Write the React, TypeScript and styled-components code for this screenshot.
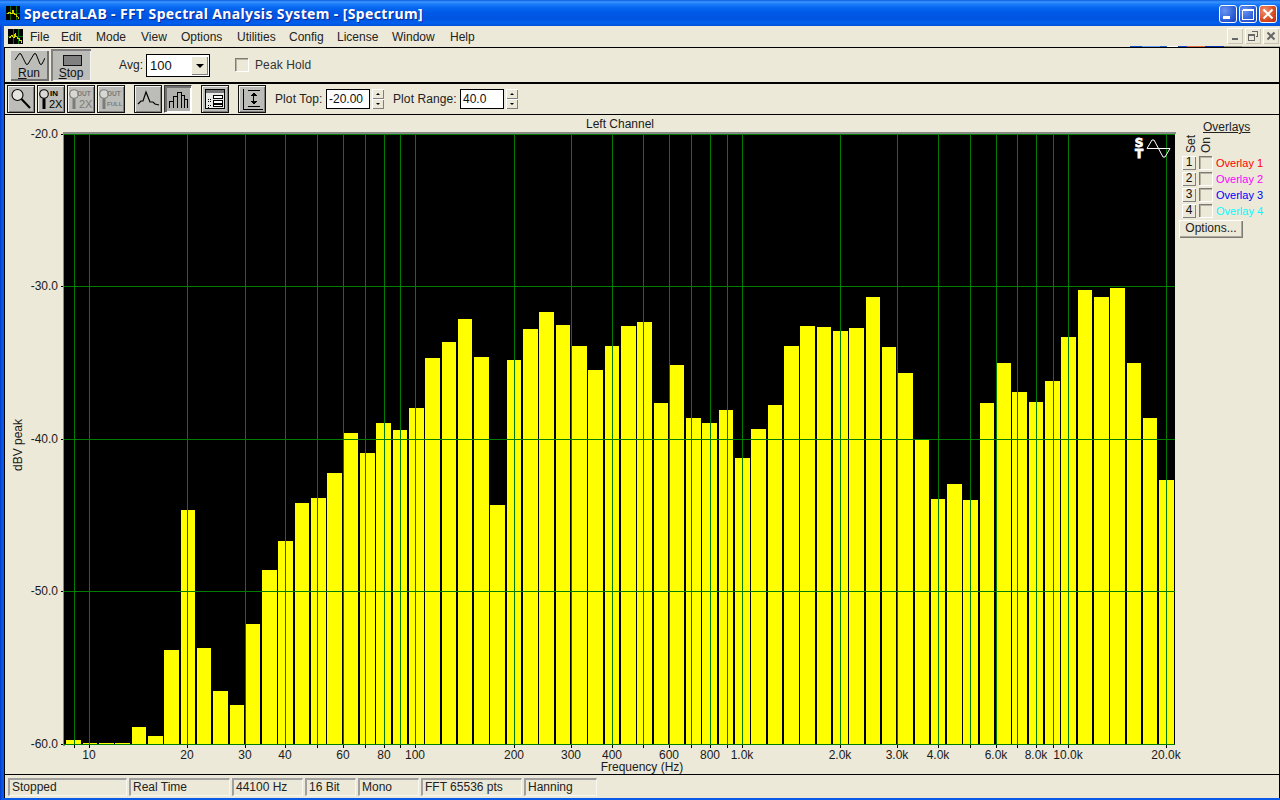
import React from "react";
import styled, { createGlobalStyle, css } from "styled-components";

const Global = createGlobalStyle`
  html, body { margin: 0; padding: 0; width: 1280px; height: 800px; overflow: hidden; background: #ece9d8; }
  * { box-sizing: border-box; }
`;

const UI = `"Liberation Sans", Arial, sans-serif`;

const Window = styled.div`
  width: 1280px; height: 800px; display: flex; flex-direction: column;
  font-family: ${UI}; font-size: 12px; color: #1a1a1a;
  background: linear-gradient(90deg, #0038c8 0, #0a58e6 2px, #0a5ae8 4px);
`;
const TitleBar = styled.div`
  height: 26px; flex: none; display: flex; align-items: center; padding: 0 3px 0 6px;
  background: linear-gradient(180deg, #0a5ee0 0, #3d95ff 2px, #1a7cf8 4px, #0466ee 8px, #0058e6 13px, #0055e0 19px, #0060ee 23px, #0050d8 26px);
`;
const TitleText = styled.div`
  flex: 1; margin-left: 4px; color: #fff; font-family: "Noto Sans", sans-serif; font-weight: 700; font-size: 14px;
  letter-spacing: 0.37px; text-shadow: 1px 1px 0 #0a2a98; white-space: nowrap;
`;
const CaptionButtons = styled.div`display: flex; gap: 2px; margin-top: 2px;`;
const CaptionButton = styled.div<{ $close?: boolean }>`
  width: 18px; height: 18px; border: 1px solid #fff; border-radius: 3px; display: flex; align-items: center; justify-content: center;
  background: ${(p) => p.$close
    ? "radial-gradient(circle at 30% 30%, #f09070, #d84a20 60%, #b82c10)"
    : "radial-gradient(circle at 30% 30%, #6a95f0, #2f5fd8 60%, #1c3fb8)"};
`;
const Client = styled.div`
  flex: 1; margin: 0 0 2px 4px; background: #ece9d8; display: flex; flex-direction: column; min-height: 0;
`;
const MenuBar = styled.div`
  height: 21px; flex: none; display: flex; align-items: center; position: relative; padding-left: 4px;
`;
const MenuItems = styled.div`display: flex; margin-left: 7px; flex: 1;`;
const MenuItem = styled.span<{ $w: number }>`
  width: ${(p) => p.$w}px; font-size: 12px; color: #222; white-space: nowrap;
`;
const MdiButtons = styled.div`display: flex; gap: 2px; padding-right: 1px; margin-top: -1px;`;
const MdiButton = styled.div`
  width: 16px; height: 16px; background: #ece9d8; display: flex; align-items: center; justify-content: center;
  box-shadow: inset 1px 1px 0 #fff, inset -1px -1px 0 #c8c4b4;
`;
const BackdropStrip = styled.div`
  position: absolute; right: 0; bottom: 0; width: 150px; height: 1px;
  background: linear-gradient(90deg, #1050c8 0 8%, #6a9cf0 8% 20%, #2060d0 20% 25%, #fff 25% 32%, #1848c8 32% 38%, #e06a40 38% 50%, #0830b0 50% 63%, #8a8a80 63% 75%, #b8b4a8 75%);
`;
const Workspace = styled.div`
  flex: 1; min-height: 0; display: flex; flex-direction: column;
  border-top: 1px solid #000; border-left: 1px solid #000; border-right: 1px solid #000;
`;
const ToolbarOne = styled.div`
  height: 36px; flex: none; display: flex; align-items: flex-start; padding: 1px 0 0 4px; border-bottom: 2px solid #000;
`;
const BigButton = styled.div<{ $pressed?: boolean }>`
  width: 40px; height: 32px; margin-right: 2px; display: flex; flex-direction: column; align-items: center; background: #bcbcb8;
  color: #111; font-size: 12px; line-height: 12px; padding-top: 3px;
  ${(p) => p.$pressed
    ? css`box-shadow: inset 2px 2px 0 #808080, inset -1px -1px 0 #f4f4f0;`
    : css`box-shadow: inset 2px 2px 0 #e8e8e4, inset -2px -2px 0 #707070;`}
  u { text-decoration: underline; }
`;
const BigIcon = styled.svg`display: block; width: 32px; height: 15px; flex: none;`;
const AvgLabel = styled.span`margin: 9px 0 0 26px; width: 27px; letter-spacing: 0.1px; color: #222;`;
const Combo = styled.div`
  width: 64px; height: 23px; margin-top: 5px; background: #fff; border: 1px solid #000; border-right-width: 1px;
  display: flex; justify-content: space-between; align-items: center; padding: 1px 1px 1px 3px; font-size: 13px; color: #111;
`;
const ComboArrow = styled.div`
  width: 17px; height: 19px; background: #ece9d8; display: flex; align-items: center; justify-content: center;
  box-shadow: inset 1px 1px 0 #fff, inset -1px -1px 0 #808080;
  &::after { content: ""; border-left: 4px solid transparent; border-right: 4px solid transparent; border-top: 4px solid #000; }
`;
const CheckBox = styled.div`
  width: 13px; height: 13px; flex: none; background: #ece9d8;
  border-top: 1px solid #7c7c74; border-left: 1px solid #7c7c74;
  box-shadow: 1px 1px 0 #fff, inset 1px 1px 0 #b8b4a4;
`;
const PeakCheck = styled(CheckBox)`margin: 9px 0 0 25px;`;
const PeakLabel = styled.span`margin: 9px 0 0 7px; letter-spacing: 0.1px; color: #333;`;
const ToolbarTwo = styled.div`
  height: 31px; flex: none; display: flex; align-items: flex-start; padding: 1px 0 0 2px; border-bottom: 1px solid #000;
`;
const ToolButton = styled.div<{ $pressed?: boolean; $gap?: number }>`
  width: 28px; height: 28px; flex: none; margin-right: ${(p) => p.$gap ?? 2}px; background: #bcbcb8; border: 1px solid #111;
  ${(p) => p.$pressed
    ? css`background: #b0b0ac; box-shadow: inset 2px 2px 0 #707070, inset -1px -1px 0 #fff; border-color: #333 #fff #fff #333;`
    : css`box-shadow: inset 1px 1px 0 #f0f0ec, inset -1px -1px 0 #808080;`}
`;
const ToolSvg = styled.svg`display: block; width: 26px; height: 26px;`;
const FieldLabel = styled.span<{ $w: number; $ml: number }>`
  width: ${(p) => p.$w}px; margin: 7px 0 0 ${(p) => p.$ml}px; white-space: nowrap; color: #222; letter-spacing: 0.1px;
`;
const Field = styled.div`
  width: 44px; height: 20px; margin-top: 4px; background: #fff; border: 1px solid #000; padding: 2px 0 0 2px; color: #111; font-size: 12px; line-height: 14px;
`;
const Spinner = styled.div`
  width: 12px; height: 20px; margin: 4px 0 0 2px; display: flex; flex-direction: column;
`;
const SpinPart = styled.div<{ $down?: boolean }>`
  flex: 1; background: #ece9d8; display: flex; align-items: center; justify-content: center;
  box-shadow: inset 1px 1px 0 #fff, inset -1px -1px 0 #808080;
  &::after {
    content: ""; border-left: 2px solid transparent; border-right: 2px solid transparent;
    ${(p) => p.$down ? "border-top: 2px solid #000;" : "border-bottom: 2px solid #000;"}
  }
`;
const ChartRow = styled.div`flex: 1; min-height: 0; display: flex;`;
const ChartSvg = styled.svg`
  width: 1171px; height: 659px; display: block; flex: none; overflow: visible;
  text { font-family: ${UI}; font-size: 12px; fill: #1a1a1a; }
`;
const SidePanel = styled.div`flex: 1; min-width: 0; display: flex; flex-direction: column; padding-top: 5px;`;
const OverlayTitle = styled.div`margin-left: 27px; text-decoration: underline; line-height: 14px; height: 14px; font-size: 12px; color: #222;`;
const RotHeads = styled.div`display: flex; height: 22px; margin-left: 9px; gap: 3px;`;
const RotHead = styled.span`
  writing-mode: vertical-rl; transform: rotate(180deg); width: 12px; height: 19px; line-height: 12px; text-align: left; color: #222;
`;
const OverlayRow = styled.div`display: flex; align-items: flex-start; height: 16px; margin-left: 6px;`;
const NumButton = styled.div`
  width: 14px; height: 14px; background: #ece9d8; text-align: center; font-size: 12px; line-height: 13px; color: #111;
  box-shadow: inset 1px 1px 0 #fff, inset -1px -1px 0 #808080;
`;
const RowCheck = styled(CheckBox)`margin-left: 3px;`;
const OverlayName = styled.span<{ $c: string }>`margin-left: 4px; color: ${(p) => p.$c}; font-size: 11px; line-height: 14px; white-space: nowrap;`;
const OptionsButton = styled.div`
  width: 64px; height: 18px; margin-left: 3px; background: #ece9d8; text-align: center; line-height: 17px; color: #222; font-size: 12px;
  box-shadow: inset 1px 1px 0 #fff, inset -1px -1px 0 #7c7c74, inset -2px -2px 0 #aca899;
`;
const StatusBar = styled.div`
  height: 24px; flex: none; border-top: 1px solid #000; display: flex; padding: 3px 0 0 3px;
`;
const StatusCell = styled.div<{ $w: number }>`
  width: ${(p) => p.$w}px; height: 18px; margin-right: 2px; padding-left: 2px; line-height: 14px; white-space: nowrap; color: #222;
  border-top: 2px solid #a0a0a0; border-left: 2px solid #a0a0a0; border-right: 1px solid #f8f8f0; border-bottom: 1px solid #f8f8f0;
`;

const tops = [740,743,743,743,727,736,650,510,648,691,705,624,570,541,503,498,473,433,453,423,430,408,358,342,319,357,505,360,329,312,325,346,370,346,326,322,403,365,418,423,410,458,429,405,346,326,327,331,328,297,347,373,440,499,484,500,403,363,392,402,381,337,290,297,288,363,418,480];
const fx = (f: number) => Math.round(89 + 326.3 * Math.log10(f / 10));
const gridFreqs = [9,10,20,30,40,50,60,70,80,90,100,200,300,400,500,600,700,800,900,1000,2000,3000,4000,5000,6000,7000,8000,9000,10000,20000];
const xLabels: [number, string][] = [[10,"10"],[20,"20"],[30,"30"],[40,"40"],[60,"60"],[80,"80"],[100,"100"],[200,"200"],[300,"300"],[400,"400"],[600,"600"],[800,"800"],[1000,"1.0k"],[2000,"2.0k"],[3000,"3.0k"],[4000,"4.0k"],[6000,"6.0k"],[8000,"8.0k"],[10000,"10.0k"],[20000,"20.0k"]];
const yRows: [number, string][] = [[134,"-20.0"],[286,"-30.0"],[439,"-40.0"],[591,"-50.0"],[744,"-60.0"]];
const menus: [string, number][] = [["File",31],["Edit",35],["Mode",45],["View",40],["Options",56],["Utilities",52],["Config",48],["License",55],["Window",58],["Help",30]];
const overlays: [string, string][] = [["Overlay 1","#ff0000"],["Overlay 2","#ff00ff"],["Overlay 3","#0000ff"],["Overlay 4","#00ffff"]];
const statuses: [string, number][] = [["Stopped",119],["Real Time",101],["44100 Hz",71],["16 Bit",51],["Mono",61],["FFT 65536 pts",101],["Hanning",73]];

const AppIcon = ({ size }: { size: number }) => (
  <svg width={size} height={size} viewBox="0 0 16 16" shapeRendering="crispEdges" style={{ flex: "none" }}>
    <rect width="16" height="16" fill="#000" />
    <path d="M0 8.5H16M5.5 0V16M11.5 0V16" stroke="#0a7a0a" />
    <path d="M1 9h2v-2h2v2h2v-4h1v3h2v2h2v2h2v2h1" fill="none" stroke="#e8e800" />
  </svg>
);

const Glass = ({ c }: { c: string }) => (
  <>
    <circle cx="6" cy="8" r="4.3" fill="#d8d8d4" stroke={c} strokeWidth="1.1" />
    <path d="M6 12.5V23" stroke={c} strokeWidth="3" />
  </>
);
const small = { fontFamily: UI, fontWeight: 700 } as const;
const stBlock = { fill: "#fff", stroke: "#fff", strokeWidth: 0.8, fontWeight: 900, fontSize: 12, fontFamily: "'DejaVu Sans', sans-serif" };

const Chart = () => (
  <ChartSvg viewBox="5 115 1171 659">
    <text x="620" y="128" textAnchor="middle">Left Channel</text>
    <text transform="translate(22 445) rotate(-90)" textAnchor="middle">dBV peak</text>
    <g shapeRendering="crispEdges">
      <rect x="63" y="132" width="1113" height="2" fill="#888" />
      <rect x="63" y="132" width="2" height="614" fill="#888" />
      <rect x="64" y="134" width="1111" height="611" fill="#000" />
      {tops.map((t, i) => {
        const x = Math.round(66.4 + 16.31 * i);
        const e = Math.round(81 + 16.31 * i);
        return <rect key={i} x={x} y={t} width={e - x} height={744 - t} fill="#ffff00" />;
      })}
      {gridFreqs.map((f) => (
        <g key={f}>
          <rect x={fx(f)} y="134" width="1" height="611" fill="#007c00" />
          <rect x={fx(f)} y="745" width="1" height="3" fill="#000" />
        </g>
      ))}
      {yRows.map(([y]) => (
        <g key={y}>
          <rect x="64" y={y} width="1111" height="1" fill="#007c00" />
          <rect x="61" y={y} width="2" height="1" fill="#000" />
        </g>
      ))}
    </g>
    {yRows.map(([y, t]) => <text key={y} x="58" y={y + 4} textAnchor="end">{t}</text>)}
    {xLabels.map(([f, t]) => <text key={t} x={fx(f)} y="759" textAnchor="middle">{t}</text>)}
    <text x="642" y="771" textAnchor="middle">Frequency (Hz)</text>
    <text textAnchor="middle" style={stBlock}>
      <tspan x="1139" y="147">S</tspan>
      <tspan x="1139" y="157.5">T</tspan>
    </text>
    <path d="M1147 148.5 L1152 140 L1154 140 L1163 157 L1165 157 L1170 148.5 M1147 148.5 H1170" fill="none" stroke="#fff" strokeWidth="1" />
  </ChartSvg>
);

export default function App() {
  return (
    <Window>
      <Global />
      <TitleBar>
        <AppIcon size={14} />
        <TitleText>SpectraLAB - FFT Spectral Analysis System - [Spectrum]</TitleText>
        <CaptionButtons>
          <CaptionButton>
            <svg width="12" height="12" viewBox="0 0 12 12" shapeRendering="crispEdges"><rect x="1" y="8" width="7" height="3" fill="#fff" /></svg>
          </CaptionButton>
          <CaptionButton>
            <svg width="12" height="12" viewBox="0 0 12 12" shapeRendering="crispEdges"><path d="M0.5 2.5H11.5V11.5H0.5Z M0.5 1.5H11.5" fill="none" stroke="#fff" /></svg>
          </CaptionButton>
          <CaptionButton $close>
            <svg width="12" height="12" viewBox="0 0 12 12"><path d="M1.5 1.5L10.5 10.5M10.5 1.5L1.5 10.5" stroke="#fff" strokeWidth="2" /></svg>
          </CaptionButton>
        </CaptionButtons>
      </TitleBar>
      <Client>
        <MenuBar>
          <AppIcon size={15} />
          <MenuItems>
            {menus.map(([m, w]) => <MenuItem key={m} $w={w}>{m}</MenuItem>)}
          </MenuItems>
          <MdiButtons>
            <MdiButton><svg width="10" height="10" viewBox="0 0 10 10" shapeRendering="crispEdges"><rect x="2" y="7" width="6" height="2" fill="#666" /></svg></MdiButton>
            <MdiButton><svg width="10" height="10" viewBox="0 0 10 10" shapeRendering="crispEdges"><path d="M3.5 0.5H9.5V5.5H7.5M0.5 3.5H6.5V9.5H0.5ZM0.5 4.5H6.5" fill="none" stroke="#666" /></svg></MdiButton>
            <MdiButton><svg width="10" height="10" viewBox="0 0 10 10"><path d="M1.5 1.5L8.5 8.5M8.5 1.5L1.5 8.5" stroke="#666" strokeWidth="2" /></svg></MdiButton>
          </MdiButtons>
          <BackdropStrip />
        </MenuBar>
        <Workspace>
          <ToolbarOne>
            <BigButton>
              <BigIcon viewBox="0 0 32 15"><path d="M2 8 L6 2 Q7 1 8 2 L13 12 Q14 13 15 12 L21 2 Q22 1 23 2 L27 12 Q28 13 29 12 L32 6" fill="none" stroke="#000" strokeWidth="1" /></BigIcon>
              <span><u>R</u>un</span>
            </BigButton>
            <BigButton $pressed>
              <BigIcon viewBox="0 0 32 15" shapeRendering="crispEdges"><rect x="8.5" y="3.5" width="18" height="10" fill="#808080" stroke="#111" /></BigIcon>
              <span><u>S</u>top</span>
            </BigButton>
            <AvgLabel>Avg:</AvgLabel>
            <Combo>100<ComboArrow /></Combo>
            <PeakCheck />
            <PeakLabel>Peak Hold</PeakLabel>
          </ToolbarOne>
          <ToolbarTwo>
            <ToolButton>
              <ToolSvg viewBox="0 0 26 26"><circle cx="9.5" cy="9" r="5.5" fill="#e4e4e0" stroke="#000" strokeWidth="1.1" /><path d="M13.5 13L22 22" stroke="#000" strokeWidth="2" /></ToolSvg>
            </ToolButton>
            <ToolButton>
              <ToolSvg viewBox="0 0 26 26"><Glass c="#000" /><text x="12" y="10" style={{ ...small, fontSize: 8 }}>IN</text><text x="11" y="22" style={{ fontFamily: UI, fontSize: 11 }}>2X</text></ToolSvg>
            </ToolButton>
            <ToolButton>
              <ToolSvg viewBox="0 0 26 26"><Glass c="#7c7c78" /><text x="9" y="10" fill="#7c7c78" style={{ ...small, fontSize: 6.5 }}>OUT</text><text x="11" y="22" fill="#7c7c78" style={{ fontFamily: UI, fontSize: 11 }}>2X</text></ToolSvg>
            </ToolButton>
            <ToolButton $gap={9}>
              <ToolSvg viewBox="0 0 26 26"><Glass c="#7c7c78" /><text x="9" y="10" fill="#7c7c78" style={{ ...small, fontSize: 6.5 }}>OUT</text><text x="9" y="20" fill="#7c7c78" style={{ ...small, fontSize: 6 }}>FULL</text></ToolSvg>
            </ToolButton>
            <ToolButton>
              <ToolSvg viewBox="0 0 26 26"><path d="M3 18 L6 15 L8 15 L11 6 L15 16 L18 16 L20 18 L24 19" fill="none" stroke="#000" strokeWidth="1.2" /></ToolSvg>
            </ToolButton>
            <ToolButton $pressed $gap={9}>
              <ToolSvg viewBox="0 0 26 26" shapeRendering="crispEdges"><path d="M4.5 22V15.5H8.5V10.5H12.5V6.5H16.5V9.5H19.5V13.5H22.5V22M8.5 22V15M12.5 22V10M16.5 22V9M19.5 22V13" fill="none" stroke="#000" /></ToolSvg>
            </ToolButton>
            <ToolButton $gap={9}>
              <ToolSvg viewBox="0 0 26 26" shapeRendering="crispEdges">
                <rect x="3.5" y="3.5" width="19" height="19" fill="#e8e8e4" stroke="#000" />
                <rect x="4" y="4" width="18" height="3" fill="#777" />
                <path d="M11.5 9.5H20.5V12.5H11.5ZM11.5 14.5H20.5V17.5H11.5ZM11.5 18.5H20.5V20.5H11.5Z" fill="#fff" stroke="#000" />
                <path d="M6 13h1M8 13h1M6 15h1M8 15h1M6 19h1M8 19h1M6 21h1" stroke="#000" />
              </ToolSvg>
            </ToolButton>
            <ToolButton>
              <ToolSvg viewBox="0 0 26 26" shapeRendering="crispEdges">
                <path d="M4.5 3V23.5H24M9 4.5H21M9 20.5H21" fill="none" stroke="#000" />
                <path d="M15 6L12 10H18ZM15 19L12 15H18Z" fill="#000" />
                <path d="M14.5 9V16" stroke="#000" strokeWidth="1" />
              </ToolSvg>
            </ToolButton>
            <FieldLabel $w={51} $ml={7}>Plot Top:</FieldLabel>
            <Field>-20.00</Field>
            <Spinner><SpinPart /><SpinPart $down /></Spinner>
            <FieldLabel $w={67} $ml={9}>Plot Range:</FieldLabel>
            <Field>40.0</Field>
            <Spinner><SpinPart /><SpinPart $down /></Spinner>
          </ToolbarTwo>
          <ChartRow>
            <Chart />
            <SidePanel>
              <OverlayTitle>Overlays</OverlayTitle>
              <RotHeads><RotHead>Set</RotHead><RotHead>On</RotHead></RotHeads>
              {overlays.map(([n, c], i) => (
                <OverlayRow key={n}>
                  <NumButton>{i + 1}</NumButton>
                  <RowCheck />
                  <OverlayName $c={c}>{n}</OverlayName>
                </OverlayRow>
              ))}
              <OptionsButton>Options...</OptionsButton>
            </SidePanel>
          </ChartRow>
          <StatusBar>
            {statuses.map(([s, w]) => <StatusCell key={s} $w={w}>{s}</StatusCell>)}
          </StatusBar>
        </Workspace>
      </Client>
    </Window>
  );
}
